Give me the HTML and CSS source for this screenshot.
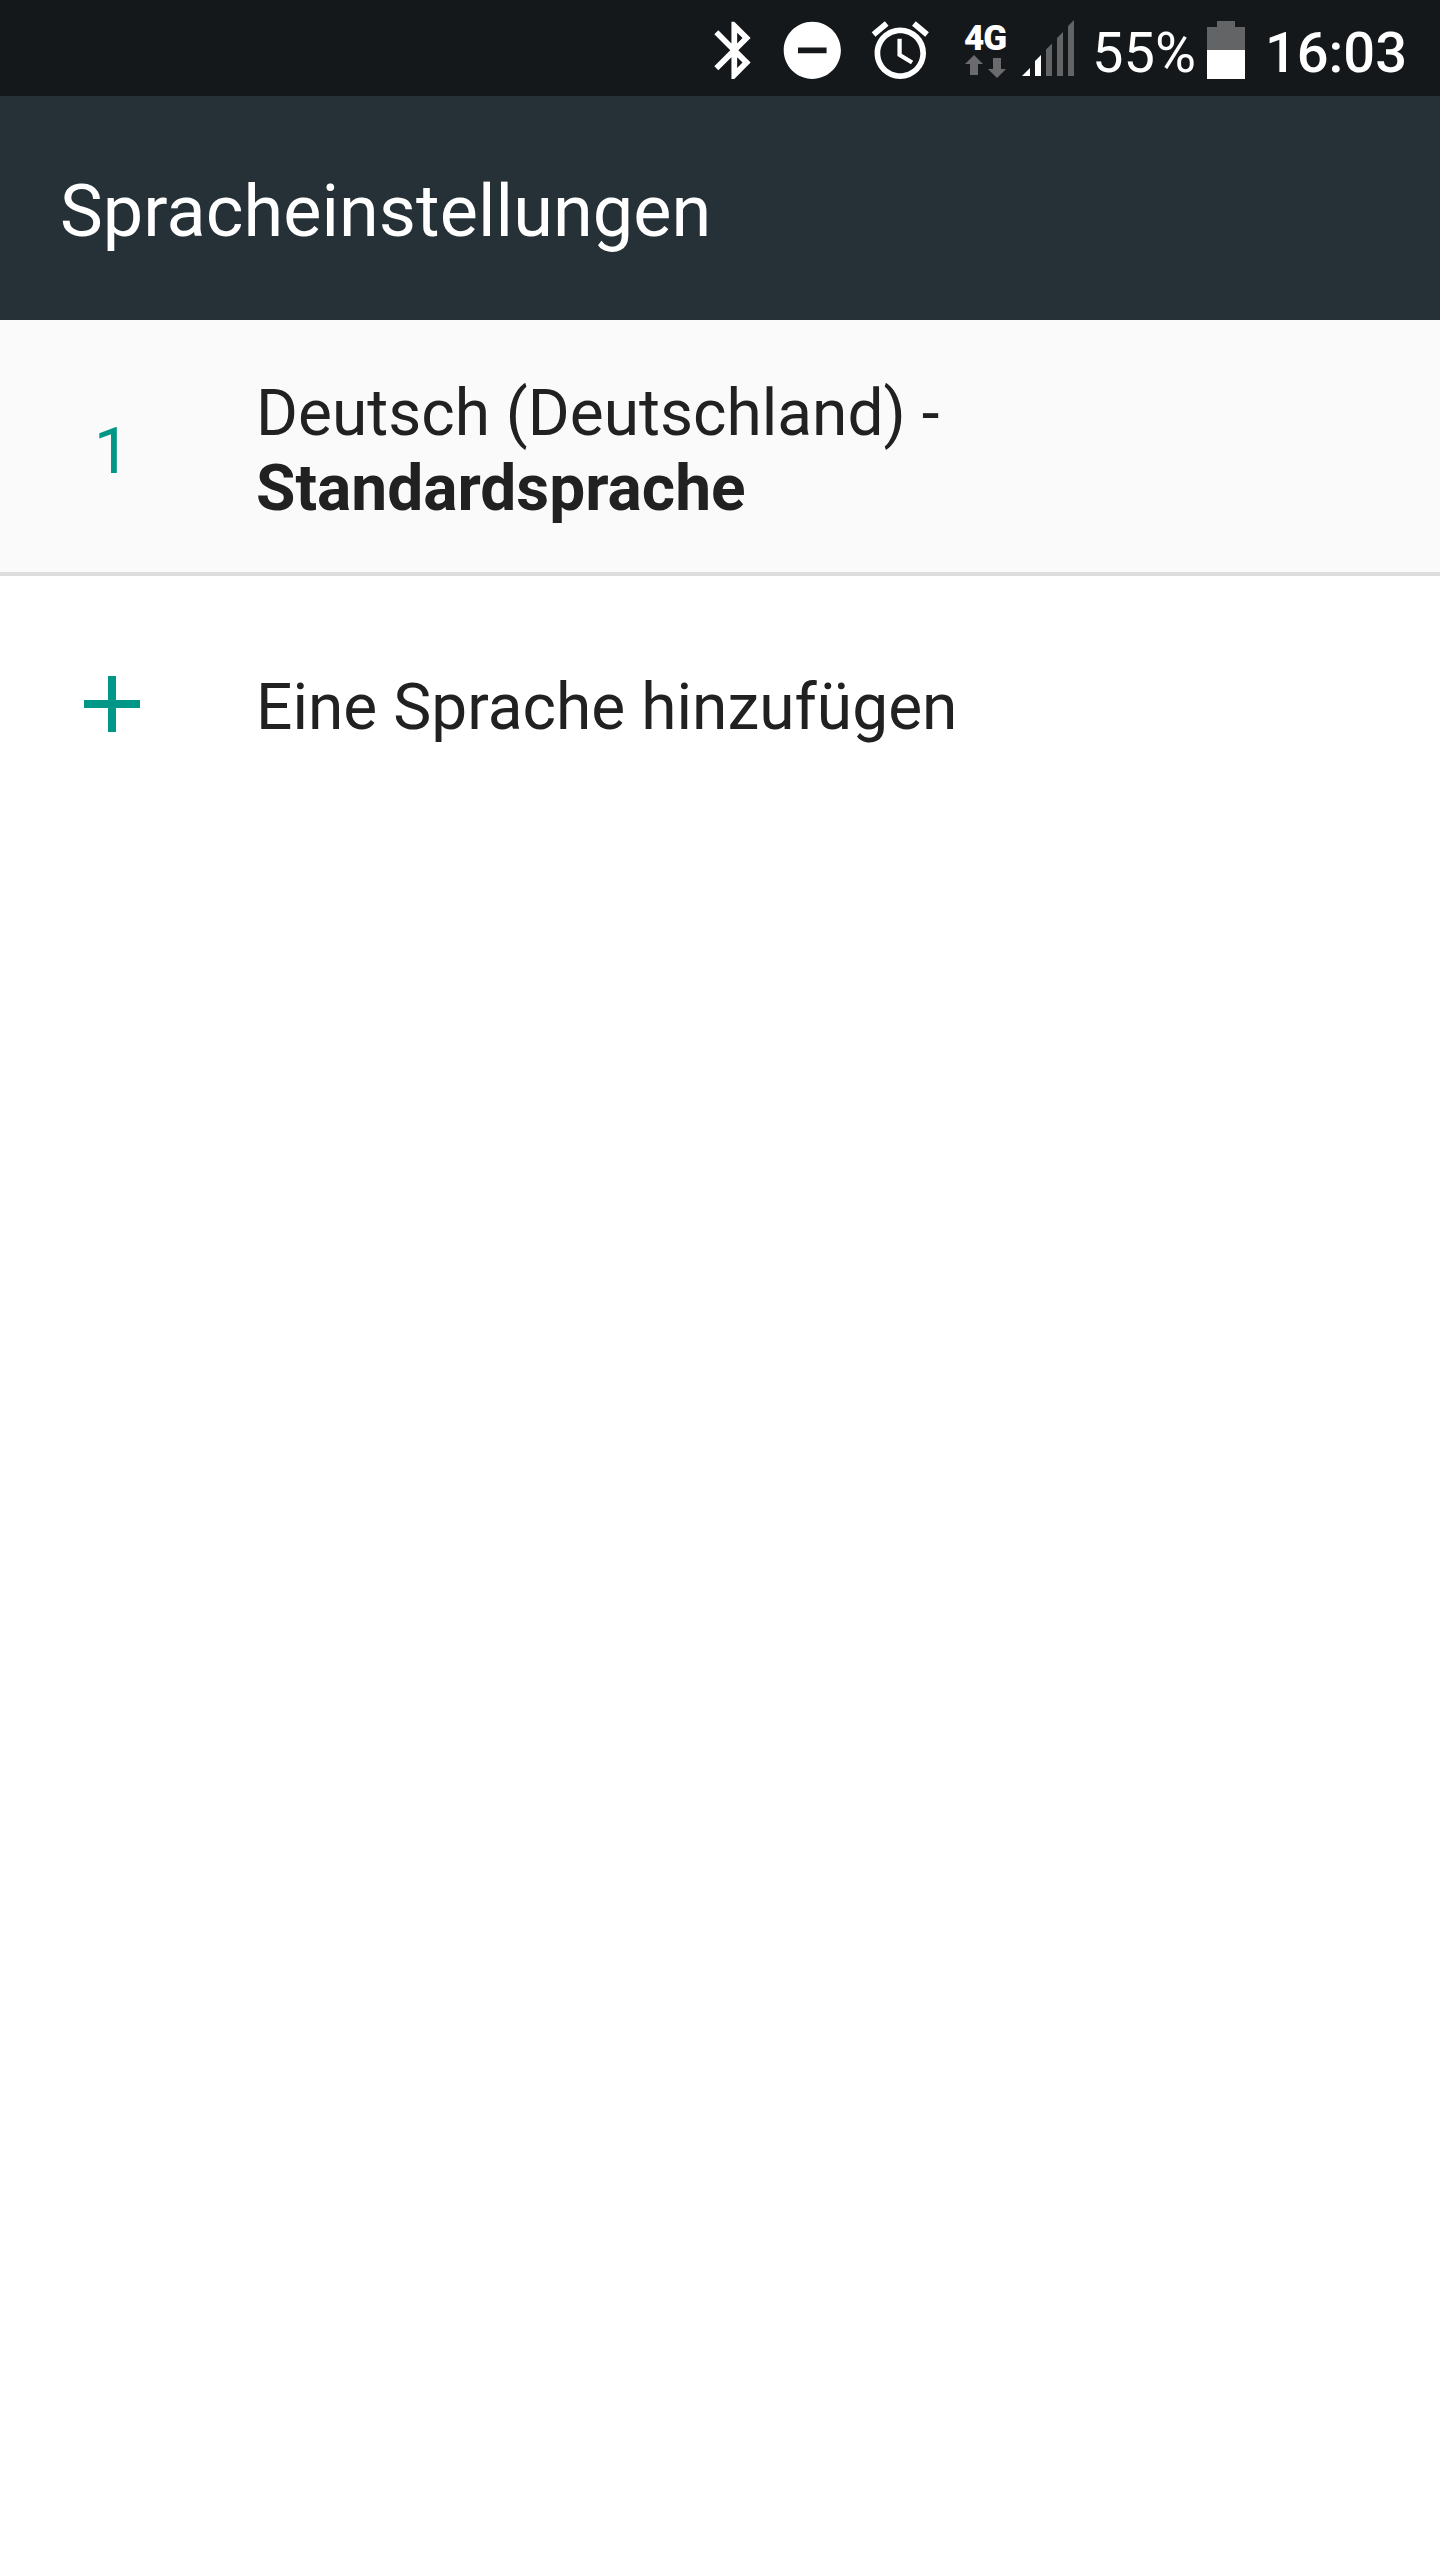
FILE: index.html
```
<!DOCTYPE html>
<html lang="de">
<head>
    <meta charset="UTF-8">
    <title>Spracheinstellungen</title>
    <meta name="viewport" content="width=device-width,initial-scale=1">
    <link rel="stylesheet" href="styles.css">
</head>
<body>
    <div class="status">
        <svg class="icon bluetooth" viewBox="0 0 24 24">
            <path d="M17.71 7.71L12 2h-1v7.59L6.41 5 5 6.41 10.59 12 5 17.59 6.41 19 11 14.41V22h1l5.71-5.71-4.3-4.29 4.3-4.29zM13 5.83l1.88 1.88L13 9.59V5.83zm1.88 10.46L13 18.17v-3.76l1.88 1.88z"/>
        </svg>
        <svg class="icon dnd" viewBox="0 0 24 24">
            <path d="M12 2C6.48 2 2 6.48 2 12s4.48 10 10 10 10-4.48 10-10S17.52 2 12 2zm5 11H7v-2h10v2z"/>
        </svg>
        <svg class="icon alarm" viewBox="0 0 24 24">
            <path d="M22 5.72l-4.6-3.86-1.29 1.53 4.6 3.86L22 5.72zM7.88 3.39L6.6 1.86 2 5.71l1.29 1.53 4.59-3.85zM12.5 8H11v6l4.75 2.85.75-1.23-4-2.37V8zM12 4c-4.97 0-9 4.03-9 9s4.02 9 9 9a9 9 0 0 0 0-18zm0 16c-3.87 0-7-3.13-7-7s3.13-7 7-7 7 3.13 7 7-3.13 7-7 7z"/>
        </svg>
        <div class="network">
            <span class="type">4G</span>
            <svg class="arrows" width="42" height="23" viewBox="0 0 42 23">
                <path d="M10 0l9 9h-5v11H6V9H1zM29 3h8v11h5l-9 9-9-9h5z"/>
            </svg>
        </div>
        <svg class="signal" width="52" height="56" viewBox="0 0 52 56">
            <path class="on" d="M0 56l8-8v8zM13 41l6-6v21h-6z"/>
            <path class="off" d="M24 29.5l6-6V56h-6zM35 18l6-6v44h-6zM46 6l6-6v56h-6z"/>
        </svg>
        <span class="percent">55%</span>
        <svg class="battery" width="38" height="58" viewBox="0 0 38 58">
            <path class="off" d="M10 0h18v6h10v24H0V6h10z"/>
            <path class="on" d="M0 29h38v29H0z"/>
        </svg>
        <span class="clock">16:03</span>
    </div>
    <div class="header">
        <h1 class="title">Spracheinstellungen</h1>
    </div>
    <div class="item first">
        <div class="num">1</div>
        <div class="text">Deutsch (Deutschland) -<br><b>Standardsprache</b></div>
    </div>
    <div class="item add">
        <div class="num">
            <svg class="plus" width="56" height="56" viewBox="0 0 56 56">
                <path d="M24 0h8v24h24v8H32v24h-8V32H0v-8h24z"/>
            </svg>
        </div>
        <div class="text">Eine Sprache hinzufügen</div>
    </div>
</body>
</html>
```
FILE: styles.css
```
html,body{
    height:100%;
}
body{
    margin:0;
    background-color:#fff;
    color:#212121;
    font-family:Roboto,sans-serif;
    font-size:64px;
    line-height:75px;
}
svg{
    display:block;
    flex:none;
}
/*状态栏 status bar*/
.status{
    display:flex;
    justify-content:flex-end;
    align-items:flex-start;
    box-sizing:border-box;
    height:96px;
    padding-right:33px;
    background-color:#14181b;
    color:#fff;
    fill:#fff;
    white-space:nowrap;
}
.icon{
    width:68.6px;
    height:68.6px;
    margin-top:16px;
}
.dnd{
    margin-left:10px;
}
.alarm{
    margin-left:19.4px;
}
.network{
    width:42px;
    margin:22px 0 0 29px;
}
.type{
    display:block;
    height:33px;
    font-size:35px;
    line-height:33px;
    font-weight:900;
    letter-spacing:-1px;
}
.arrows{
    fill:#6b6b6d;
}
.signal{
    margin:20px 0 0 16px;
}
.on{
    fill:#fff;
}
.off{
    fill:#636466;
}
.percent,
.clock{
    font-size:56px;
    line-height:66px;
    margin-top:20px;
}
.percent{
    margin-left:18px;
}
.battery{
    margin:21px 0 0 11px;
}
.clock{
    margin-left:20px;
    font-weight:500;
}
/*标题 header*/
.header{
    display:flex;
    align-items:center;
    box-sizing:border-box;
    height:224px;
    padding:7px 60px 0;
    background-color:#253136;
}
.title{
    margin:0;
    color:#fff;
    font-size:72px;
    line-height:84px;
    font-weight:400;
    letter-spacing:.08px;
}
/*列表 list*/
.item{
    display:flex;
    align-items:center;
    box-sizing:border-box;
}
.first{
    height:256px;
    padding-top:10px;
    background-color:#fafafa;
    border-bottom:4px solid #dcdddc;
}
.add{
    height:256px;
    padding-top:6px;
}
.add .text{
    letter-spacing:.03px;
}
.num{
    width:56px;
    padding:0 116px 0 84px;
    color:#009688;
    fill:#009688;
    text-align:center;
}
.plus{
    margin-top:-6px;
}
```
